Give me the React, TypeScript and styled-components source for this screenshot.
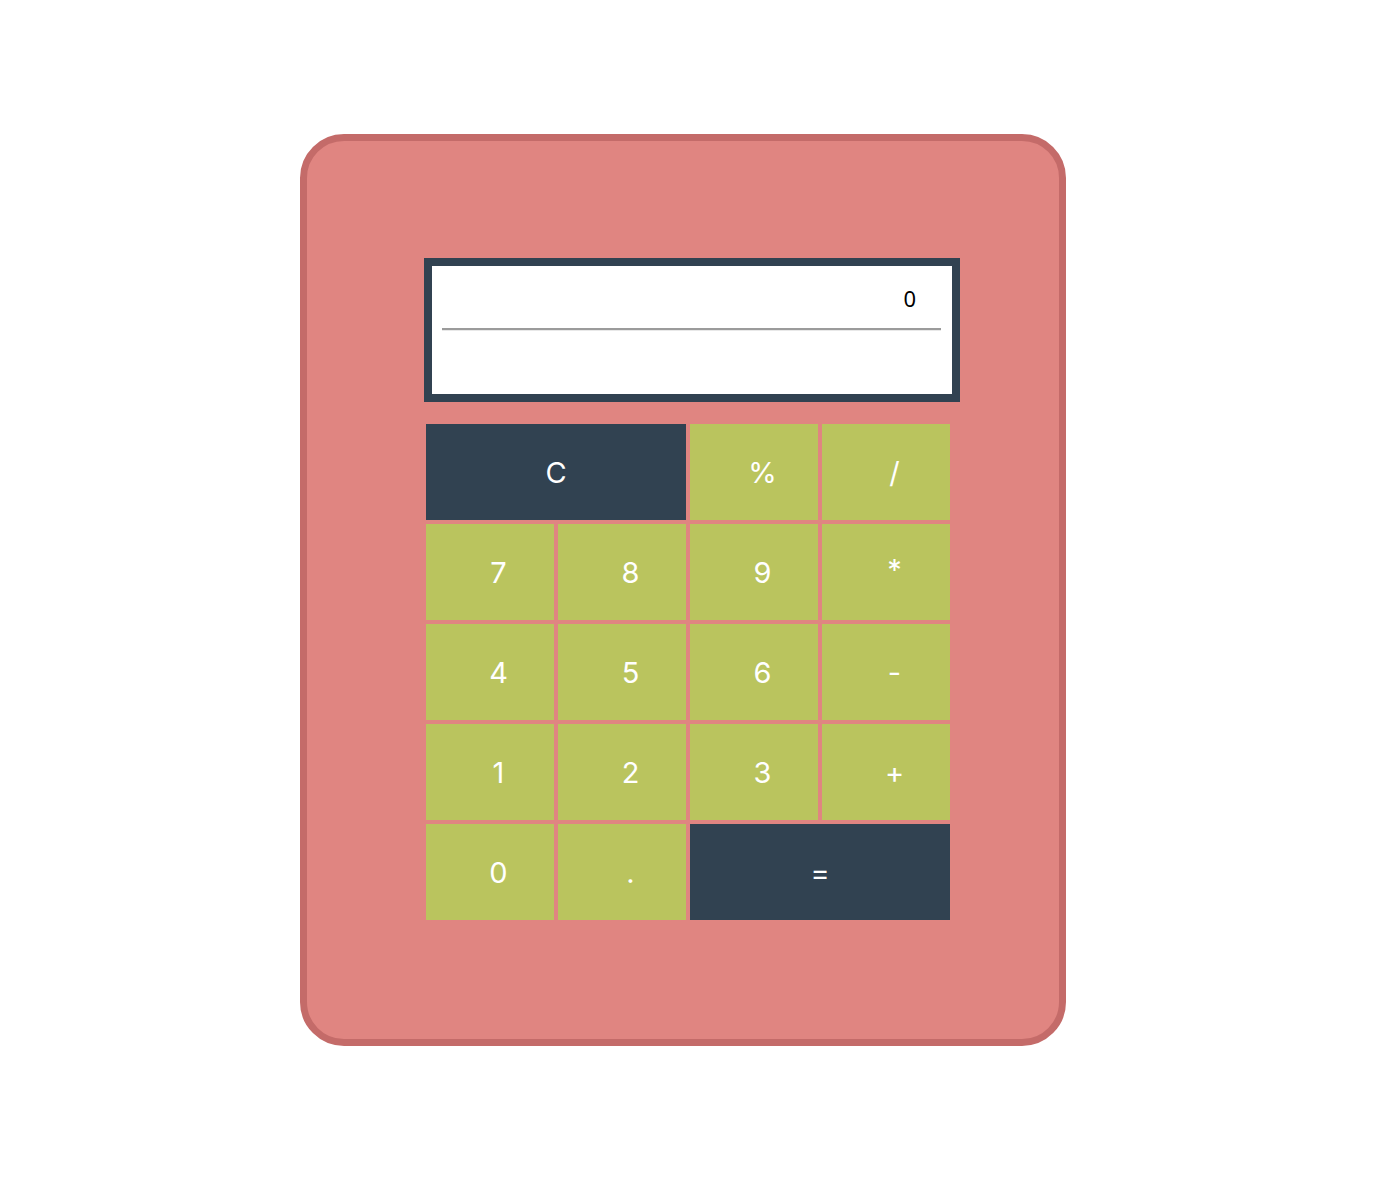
import React from "react";
import styled, { createGlobalStyle } from "styled-components";

const Global = createGlobalStyle`
  html, body { margin: 0; padding: 0; background: #ffffff; }
  body { font-family: Inter, "Liberation Sans", sans-serif; }
`;

const Page = styled.div`
  padding: 134px 0 0 300px;
  min-height: 1198px;
  box-sizing: border-box;
`;

const Card = styled.div`
  width: 766px;
  height: 912px;
  box-sizing: border-box;
  border: 7px solid #c46b69;
  border-radius: 44px;
  background: #e08581;
  padding: 117px 0 0 117px;
`;

const Display = styled.div`
  width: 536px;
  height: 144px;
  box-sizing: border-box;
  border: 8px solid #314251;
  background: #ffffff;
  padding: 18px 0 0 10px;
`;

const Readout = styled.div`
  width: 499px;
  box-sizing: border-box;
  padding-right: 25px;
  text-align: right;
  font-family: "Noto Sans", "Liberation Sans", sans-serif;
  font-size: 22px;
  line-height: 28px;
  color: #000;
`;

const Rule = styled.div`
  width: 499px;
  margin-top: 16px;
  border-top: 2px solid #9b9b9b;
  border-bottom: 1px solid #e8e8e8;
`;

const Keys = styled.div`
  margin: 22px 0 0 2px;
  display: grid;
  grid-template-columns: repeat(4, 128px);
  grid-auto-rows: 96px;
  gap: 4px;
`;

const Key = styled.button<{ $wide?: boolean; $dark?: boolean; $lift?: number }>`
  grid-column: ${(p) => (p.$wide ? "span 2" : "span 1")};
  border: none;
  margin: 0;
  padding: 0 0 ${(p) => p.$lift ?? 0}px ${(p) => (p.$wide ? 0 : 17)}px;
  background: ${(p) => (p.$dark ? "#314251" : "#bac45e")};
  color: #ffffff;
  font-family: Inter, "Liberation Sans", sans-serif;
  font-weight: 400;
  font-size: 29px;
  display: flex;
  align-items: center;
  justify-content: center;
  cursor: pointer;
`;

const keys: { label: string; wide?: boolean; dark?: boolean; lift?: number }[] = [
  { label: "C", wide: true, dark: true },
  { label: "%" },
  { label: "/" },
  { label: "7" },
  { label: "8" },
  { label: "9" },
  { label: "*", lift: 6 },
  { label: "4" },
  { label: "5" },
  { label: "6" },
  { label: "-" },
  { label: "1" },
  { label: "2" },
  { label: "3" },
  { label: "+" },
  { label: "0" },
  { label: "." },
  { label: "=", wide: true, dark: true },
];

export default function App() {
  return (
    <Page>
      <Global />
      <Card>
        <Display>
          <Readout>0</Readout>
          <Rule />
        </Display>
        <Keys>
          {keys.map((k) => (
            <Key key={k.label} $wide={k.wide} $dark={k.dark} $lift={k.lift}>
              {k.label}
            </Key>
          ))}
        </Keys>
      </Card>
    </Page>
  );
}
